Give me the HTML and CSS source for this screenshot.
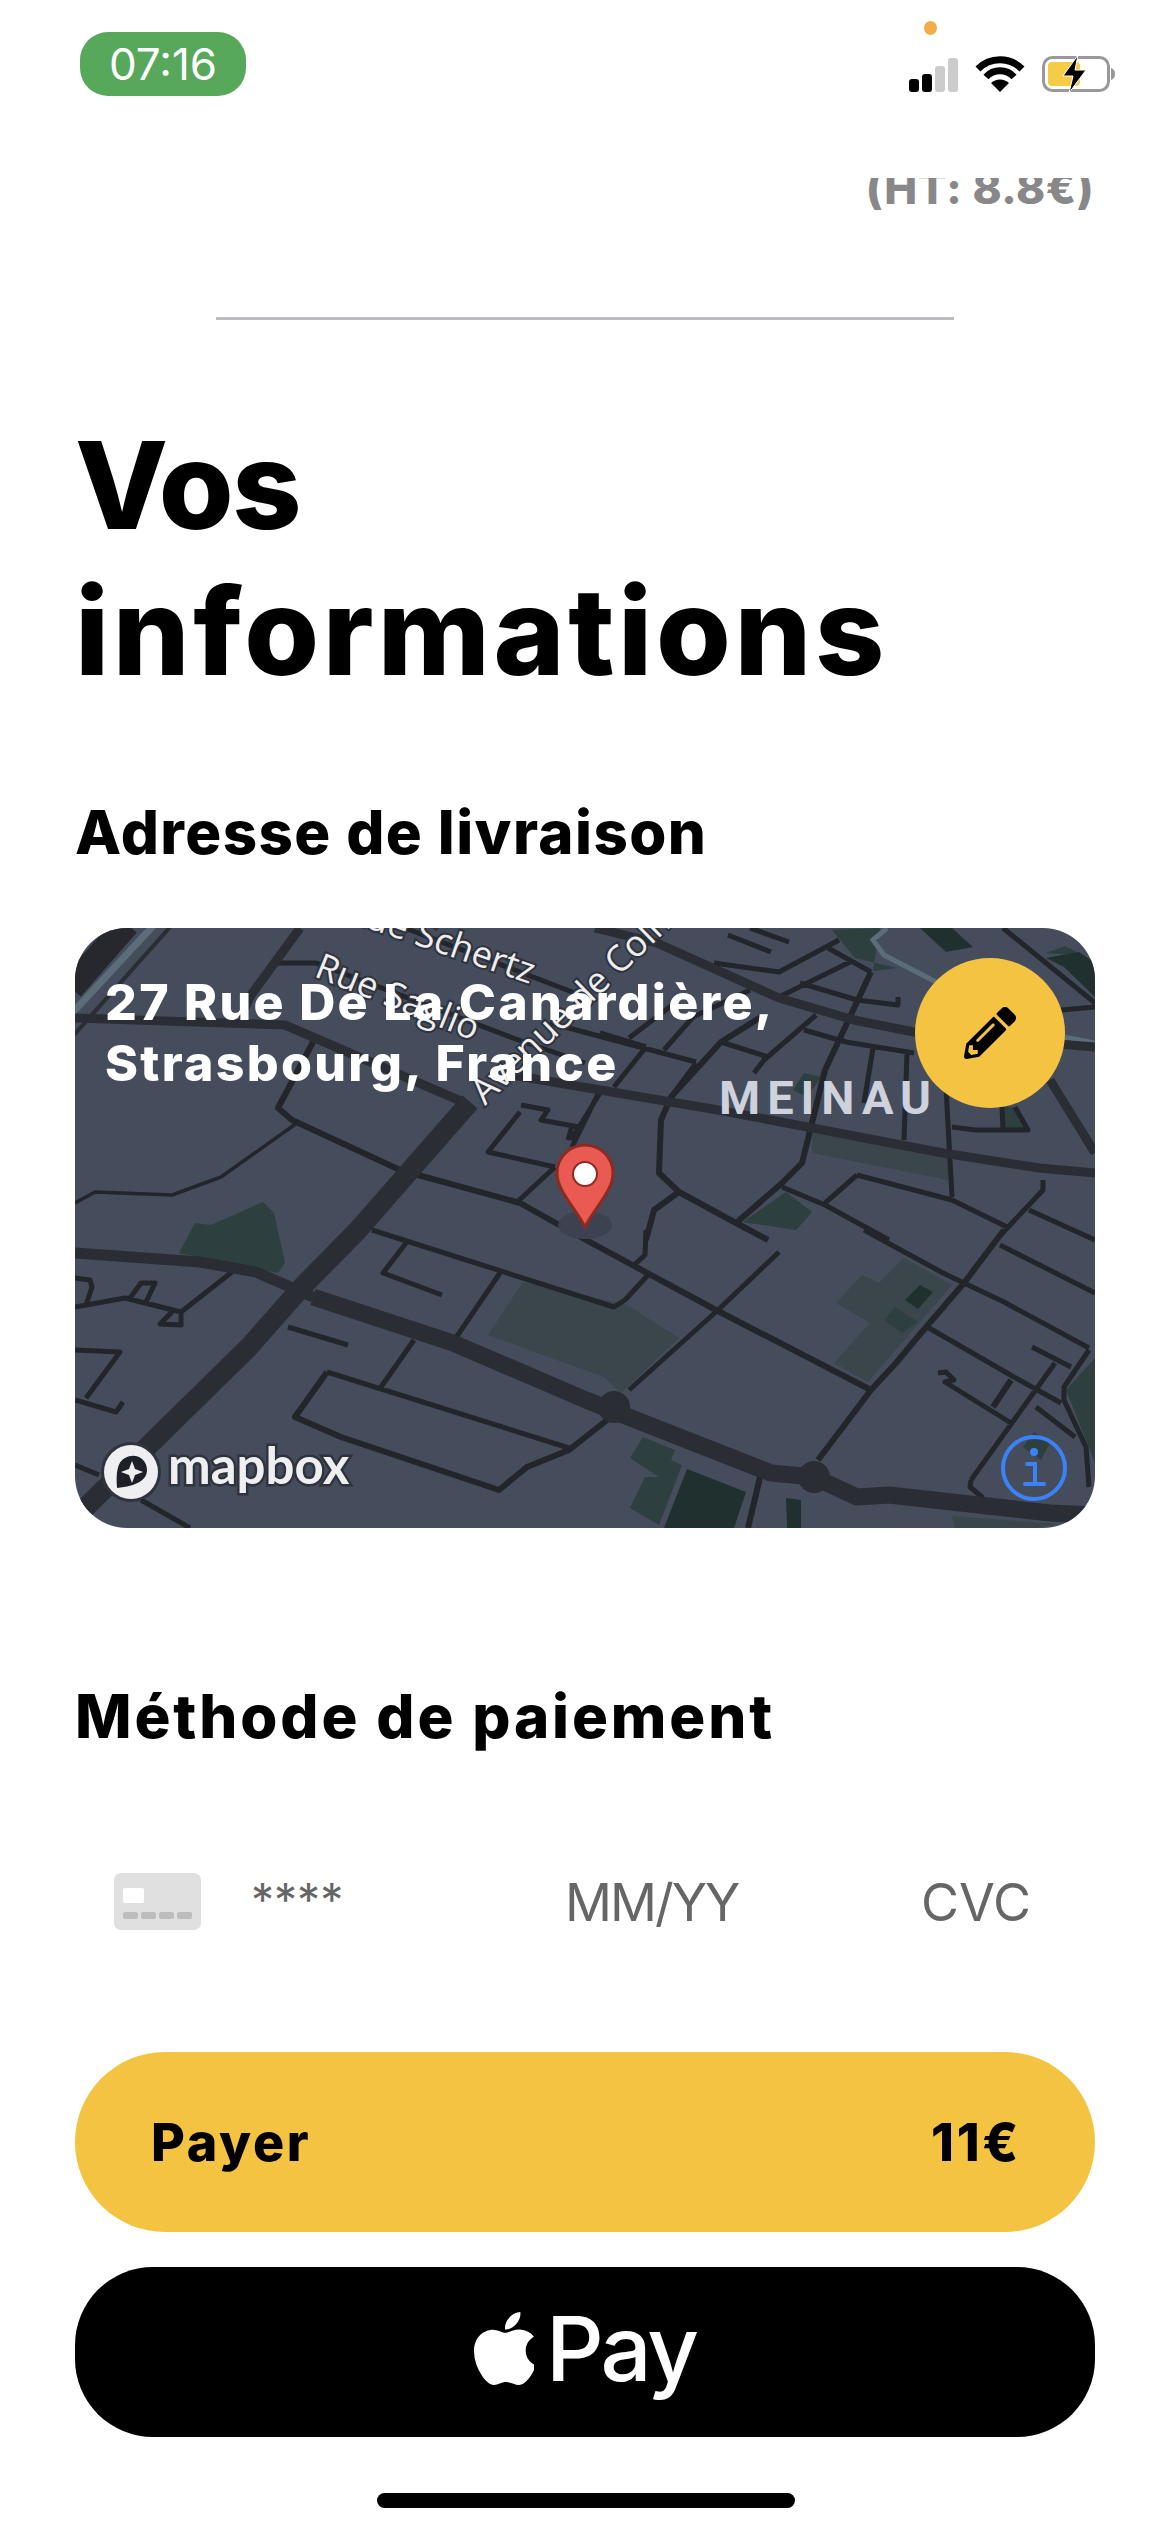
FILE: index.html
```html
<!DOCTYPE html>
<html lang="fr">
<head>
  <meta charset="UTF-8">
  <meta name="viewport" content="width=device-width, initial-scale=1.0">
  <title>Vos informations</title>
  <link rel="stylesheet" href="styles.css">
</head>
<body>
  <div id="screen">

    <div class="status-bar">
      <div class="time-pill">07:16</div>
      <div class="status-icons">
        <span class="privacy-dot"></span>
        <div class="signal">
          <span class="bar bar-1"></span>
          <span class="bar bar-2"></span>
          <span class="bar bar-3 off"></span>
          <span class="bar bar-4 off"></span>
        </div>
        <svg class="wifi" width="50" height="36" viewBox="0 0 50 36">
          <path d="M3 13A31 31 0 0 1 47 13" fill="none" stroke="#000" stroke-width="7"/>
          <path d="M11 21A19 19 0 0 1 39 21" fill="none" stroke="#000" stroke-width="7"/>
          <path d="M25 36L16 27A13 13 0 0 1 34 27Z" fill="#000"/>
        </svg>
        <svg class="battery" width="74" height="38" viewBox="0 0 74 38">
          <rect x="1.5" y="2.5" width="65" height="33" rx="9" fill="#fff" stroke="#999" stroke-width="3"/>
          <rect x="6" y="7" width="32" height="24" rx="4" fill="#f6cb45"/>
          <path d="M69 13c3 1 4 3 4 6s-1 5-4 6z" fill="#999"/>
          <path d="M36 0L21 21H31L27 38L44 15H33Z" fill="#000" stroke="#fff" stroke-width="1"/>
        </svg>
      </div>
    </div>

    <div class="price-clip"><span class="price-ht">(HT: 8.8€)</span></div>
    <div class="divider"></div>

    <h1 class="page-title"><span class="title-short">Vos</span><br>informations</h1>

    <h2 class="section-title">Adresse de livraison</h2>

    <div class="map-card">
      <svg class="map" width="1020" height="600" viewBox="0 0 1020 600">
        <rect width="1020" height="600" fill="#454c5b"/>

        <!-- parks -->
        <g fill="#3a464b">
          <path d="M448 354L552 377L604 410L546 465L529 449L413 407Z"/>
          <path d="M737 205L873 229L873 252L737 225Z"/>
          <path d="M761 375L787 347L804 355L829 330L877 357L793 454L759 435L795 395Z"/>
          <path d="M877 588L982 596L960 600L880 600Z"/>
        </g>
        <g fill="#2d3f3e">
          <path d="M188 274L199 285L210 335L203 345L104 325L120 295L136 297Z"/>
          <path d="M757 2L805 0L798 43L822 40L780 30Z"/>
          <path d="M971 25L990 18L1010 28Z"/>
          <path d="M729 145L746 149L732 169L718 162Z"/>
          <path d="M927 179L941 179L953 202L927 202Z"/>
          <path d="M711 264L737 284L721 302L668 294Z"/>
          <path d="M820 379L843 394L827 405L809 392Z"/>
          <path d="M568 509L600 522L596 532L607 537L584 597L555 580L570 549L584 549L555 530Z"/>
          <path d="M1020 430L991 462L1011 512L1020 535Z"/>
          <path d="M959 504L975 515L966 532L948 519Z"/>
        </g>
        <g fill="#20302f">
          <path d="M845 0L877 0L898 19L871 24Z"/>
          <path d="M971 30L1004 24L1020 35L1020 69L989 39Z"/>
          <path d="M845 357L858 364L843 381L830 372Z"/>
          <path d="M612 541L671 564L659 600L589 600Z"/>
          <path d="M711 570L726 572L726 600L712 600Z"/>
        </g>

        <!-- water and rail -->
        <path d="M812 0L798 12L809 27L861 54M989 109L1020 115" fill="none" stroke="#5a6d78" stroke-width="5"/>
        <path d="M-4 60L52 -4" fill="none" stroke="#26282d" stroke-width="26"/>
        <path d="M-2 84L78 -2" fill="none" stroke="#5a6d78" stroke-width="7"/>
        <path d="M-2 108L96 -2" fill="none" stroke="#2a2d33" stroke-width="4"/>

        <!-- small streets -->
        <path class="street" d="M201 35L241 35L438 110L510 135M330 0L518 72M445 184L413 224L480 239M446 177L473 182L466 192L504 199M497 198L493 212M524 164L497 219M480 239L441 275
          M653 7L696 24M675 0L714 14M764 12L704 44L639 35M753 20L796 44M775 34L704 69M725 55L782 72L823 77L823 69M741 87L689 132L679 145M729 102L771 114L839 125M798 120L789 175M832 125L829 212M871 159L877 269M877 199L900 202L953 202L940 179M927 179L928 202
          M475 95L621 134M525 105L571 119M571 119L539 159M525 165L496 212M621 135L596 169M554 110L600 75M589 122L618 89L675 62M646 114L693 129M782 247L750 275M782 247L877 272L932 299M707 259L750 277L814 312M968 252L968 262L921 312M954 282L1020 312M986 82L1020 79M928 0L1020 75
          M571 302L570 327L559 337M297 302L539 379L550 372L573 347M704 324L643 382L554 462M789 302L868 345L889 355L929 374L1014 420M925 317L1020 365M854 400L939 449L986 475M863 445L871 444L879 452L870 454L936 495M957 419L996 439M961 479L1000 509M896 552L895 559L907 569L909 575M1014 422L989 459L989 472L1011 519L1014 559M980 435L896 552
          M157 344L106 384L50 370L0 379M106 384L106 397L85 396L97 384M55 370L66 355L80 355L71 374M0 350L15 352L17 359L11 377M0 422L45 424L11 470M0 472L41 484L48 474M213 399L273 417M331 315L308 345L367 367M425 345L378 414M339 412L306 459M0 537L24 547M66 572L115 600M252 444L494 520"/>
        <path class="street street-mid" d="M238 114L203 180L217 192L325 242L445 275L511 312L641 382L796 462M686 89L646 114L596 169L586 192L584 245L604 264L661 295L693 312M604 264L579 282L571 312M796 44L750 142L736 199L727 235L707 255L661 295M252 444L220 489L266 509L424 562L452 539L494 522L532 492M929 302L889 355L846 405L821 435L796 462L743 532M936 452L918 479M686 545L673 600"/>
        <path class="street street-thin" d="M222 195L146 249L97 267L20 264L0 275"/>

        <!-- main roads -->
        <path class="road" d="M225 0L176 67L165 90M0 90L210 97L388 174M425 145L643 182L868 225L964 240L1020 245M520 0L582 15L704 70L779 92L839 104L1020 119M975 152L1020 225"/>
        <path class="road road-wide" d="M395 174L283 302L227 359L174 419L69 522L0 590"/>
        <path class="road road-lower" d="M0 325L125 334L181 344L238 369"/>
        <path class="road road-lower-wide" d="M238 369L378 415L511 472L561 492L696 545L739 549L782 569L814 567L975 585L1020 587"/>
        <circle cx="539" cy="479" r="16" fill="#2a2d33"/>
        <circle cx="739" cy="549" r="16" fill="#2a2d33"/>

        <!-- labels -->
        <text class="street-label" transform="translate(455 56) rotate(19)" text-anchor="end">Rue Schertz</text>
        <text class="street-label" transform="translate(238 48) rotate(22)">Rue Saglio</text>
        <text class="street-label" transform="translate(410 178) rotate(-44)">Avenue de Colmar</text>
        <text class="area-label" x="644" y="186">MEINAU</text>

        <!-- pin -->
        <ellipse cx="510" cy="297" rx="27" ry="14" fill="#3c424f"/>
        <path d="M510 299C500 279 482 263 482 245A28 28 0 0 1 538 245C538 263 520 279 510 299Z" fill="#e85a52" stroke="#8e2a22" stroke-width="3"/>
        <circle cx="510" cy="246" r="12" fill="#fff" stroke="#8e2a22" stroke-width="2"/>

        <!-- mapbox logo -->
        <circle cx="56" cy="544" r="30" fill="#2f333d"/>
        <circle cx="56" cy="544" r="27" fill="#efeff1"/>
        <path d="M42 560C41 545 42 534 50 530C60 524 72 530 72 542C72 552 62 558 42 560Z" fill="#1d2026"/>
        <path d="M57 533L60 541L68 544L60 547L57 555L54 547L46 544L54 541Z" fill="#efeff1"/>
        <text class="mapbox-word" x="93" y="556">mapbox</text>

        <!-- info -->
        <circle cx="959" cy="540" r="31" fill="none" stroke="#3b82f6" stroke-width="4"/>
        <circle cx="959" cy="524" r="4" fill="#3b82f6"/>
        <path d="M952 536H960V556M950 556H969" fill="none" stroke="#3b82f6" stroke-width="4" stroke-linecap="round"/>
      </svg>

      <p class="map-address">27 Rue De La Canardière,<br>Strasbourg, France</p>

      <button class="edit-btn">
        <svg width="52" height="52" viewBox="0 0 512 512">
          <path d="M497.9 142.1l-46.1 46.1c-4.7 4.7-12.3 4.7-17 0l-111-111c-4.7-4.7-4.7-12.3 0-17l46.1-46.1c18.7-18.7 49.1-18.7 67.9 0l60.1 60.1c18.8 18.7 18.8 49.1 0 67.9zM284.2 99.8L21.6 362.4.4 483.9c-2.9 16.4 11.4 30.6 27.8 27.8l121.5-21.3 262.6-262.6c4.7-4.7 4.7-12.3 0-17l-111-111c-4.8-4.7-12.4-4.7-17.1 0zM124.1 339.9c-5.5-5.5-5.5-14.3 0-19.8l154-154c5.5-5.5 14.3-5.5 19.8 0s5.5 14.3 0 19.8l-154 154c-5.5 5.5-14.3 5.5-19.8 0zM88 424h48v36.3l-64.5 11.3-31.1-31.1L51.7 376H88v48z"/>
        </svg>
      </button>
    </div>

    <h2 class="section-title payment-title">Méthode de paiement</h2>

    <div class="card-row">
      <div class="card-icon">
        <span class="card-chip"></span>
        <div class="card-digits"><span></span><span></span><span></span><span></span></div>
      </div>
      <span class="card-number">****</span>
      <span class="card-expiry">MM/YY</span>
      <span class="card-cvc">CVC</span>
    </div>

    <button class="pay-btn"><span>Payer</span><span>11€</span></button>

    <button class="apple-pay">
      <svg width="60" height="73" viewBox="4 32 365 448" fill="#fff" preserveAspectRatio="none">
        <path d="M318.7 268.7c-.2-36.7 16.4-64.4 50-84.8-18.8-26.9-47.2-41.7-84.7-44.6-35.5-2.8-74.3 20.7-88.5 20.7-15 0-49.4-19.7-76.4-19.7C63.3 141.2 4 184.8 4 273.5q0 39.3 14.4 81.2c12.8 36.7 59 126.7 107.2 125.2 25.2-.6 43-17.9 75.8-17.9 31.8 0 48.3 17.9 76.4 17.9 48.6-.7 90.4-82.5 102.6-119.3-65.2-30.7-61.7-90-61.7-91.9zm-56.6-164.2c27.3-32.4 24.8-61.9 24-72.5-24.1 1.4-52 16.4-67.9 34.9-17.5 19.8-27.8 44.3-25.6 71.9 26.1 2 49.9-11.4 69.5-34.3z"/>
      </svg>
      <span>Pay</span>
    </button>

    <div class="home-indicator"></div>
  </div>
</body>
</html>
```

FILE: styles.css
```css
* {
  box-sizing: border-box;
}

body {
  margin: 0;
  background: #fff;
  font-family: 'Inter', 'Liberation Sans', sans-serif;
  color: #000;
}

#screen {
  width: 1170px;
  height: 2532px;
  overflow: hidden;
}

button {
  border: none;
  font-family: inherit;
  cursor: pointer;
}

/* status bar */
.status-bar {
  height: 178px;
  padding: 32px 54px 0 80px;
  display: flex;
  justify-content: space-between;
  align-items: flex-start;
}

.time-pill {
  width: 166px;
  height: 64px;
  border-radius: 28px;
  background: #57a85a;
  color: #fff;
  font-size: 44px;
  line-height: 64px;
  text-align: center;
}

.status-icons {
  position: relative;
  margin-top: 23px;
  display: flex;
  align-items: flex-end;
  gap: 17px;
}

.privacy-dot {
  position: absolute;
  left: 15px;
  top: -34px;
  width: 13px;
  height: 14px;
  border-radius: 50%;
  background: #f4ab4a;
}

.signal {
  display: flex;
  align-items: flex-end;
  gap: 3px;
}

.bar {
  width: 10px;
  border-radius: 3px;
  background: #000;
}

.bar.off {
  background: #ccc;
}

.bar-1 { height: 13px; }
.bar-2 { height: 18px; }
.bar-3 { height: 26px; }
.bar-4 { height: 34px; }

.battery {
  margin-bottom: -1px;
}

/* price cut off by the scroll */
.price-clip {
  height: 32px;
  padding-right: 76px;
  overflow: hidden;
  display: flex;
  justify-content: flex-end;
  align-items: flex-end;
}

.price-ht {
  color: #888;
  font-size: 44px;
  font-weight: 800;
  letter-spacing: 0.5px;
  line-height: 44px;
}

.divider {
  width: 738px;
  height: 3px;
  margin: 107px 0 0 216px;
  background: #bcbcc0;
}

/* titles */
.page-title {
  margin: 92px 0 0 75px;
  font-size: 121px;
  font-weight: 800;
  letter-spacing: 3.6px;
  line-height: 146px;
}

.title-short {
  letter-spacing: -1.5px;
}

.section-title {
  margin: 92px 0 0 75px;
  font-size: 60px;
  font-weight: 800;
  letter-spacing: 1.4px;
  line-height: 72px;
}

.payment-title {
  margin-top: 152px;
  letter-spacing: 2.85px;
}

/* map */
.map-card {
  position: relative;
  width: 1020px;
  height: 600px;
  margin: 60px 0 0 75px;
  border-radius: 52px;
  overflow: hidden;
}

.map {
  display: block;
}

.street {
  fill: none;
  stroke: #22252a;
  stroke-width: 5;
  stroke-linejoin: round;
}

.street-mid {
  stroke-width: 6;
}

.street-thin {
  stroke-width: 3.5;
}

.road {
  fill: none;
  stroke: #2a2d33;
  stroke-width: 9;
  stroke-linejoin: round;
}

.road-wide {
  stroke-width: 20;
}

.road-lower {
  stroke-width: 11;
}

.road-lower-wide {
  stroke-width: 17;
}

.street-label {
  font-family: 'Open Sans', sans-serif;
  font-size: 36px;
  fill: #eee;
  stroke: #2f333d;
  stroke-width: 4px;
  paint-order: stroke;
}

.area-label {
  font-family: 'Roboto', sans-serif;
  font-size: 47px;
  font-weight: 700;
  letter-spacing: 7px;
  fill: #cdd2dc;
}

.mapbox-word {
  font-family: 'Lato', sans-serif;
  font-size: 51px;
  font-weight: 700;
  fill: #efeff1;
  stroke: #2f333d;
  stroke-width: 5px;
  paint-order: stroke;
}

.map-address {
  position: absolute;
  left: 30px;
  top: 44px;
  margin: 0;
  color: #fff;
  font-size: 50px;
  font-weight: 800;
  letter-spacing: 2.3px;
  line-height: 61px;
}

.edit-btn {
  position: absolute;
  top: 30px;
  right: 30px;
  width: 150px;
  height: 150px;
  padding: 0;
  border-radius: 50%;
  background: #f4c342;
  display: flex;
  align-items: center;
  justify-content: center;
}

/* card fields */
.card-row {
  height: 60px;
  margin: 121px 0 0 114px;
  display: flex;
  align-items: flex-start;
  color: #666;
}

.card-icon {
  width: 87px;
  height: 57px;
  padding: 15px 9px 0;
  border-radius: 7px;
  background: #e0e0e0;
}

.card-chip {
  display: block;
  width: 21px;
  height: 15px;
  border-radius: 2px;
  background: #fff;
}

.card-digits {
  margin-top: 9px;
  display: flex;
  gap: 3px;
}

.card-digits span {
  width: 15px;
  height: 7px;
  border-radius: 2px;
  background: #bdbdbd;
}

.card-number {
  width: 314px;
  margin: 3px 0 0 50px;
  font-size: 46px;
  line-height: 48px;
}

.card-expiry {
  width: 356px;
  margin-top: -2px;
  font-size: 52px;
  letter-spacing: -2px;
  line-height: 64px;
}

.card-cvc {
  margin-top: -2px;
  font-size: 52px;
  line-height: 64px;
}

/* pay buttons */
.pay-btn {
  width: 1020px;
  height: 180px;
  margin: 119px 0 0 75px;
  padding: 0 74px 0 76px;
  border-radius: 90px;
  background: #f4c342;
  color: #000;
  font-size: 52px;
  font-weight: 800;
  letter-spacing: 2.7px;
  display: flex;
  align-items: center;
  justify-content: space-between;
}

.apple-pay {
  width: 1020px;
  height: 170px;
  margin: 35px 0 0 75px;
  padding-bottom: 8px;
  border-radius: 78px;
  background: #000;
  color: #fff;
  font-size: 90px;
  font-weight: 500;
  letter-spacing: -3px;
  display: flex;
  align-items: center;
  justify-content: center;
  gap: 12px;
}

.home-indicator {
  width: 418px;
  height: 15px;
  margin: 56px 0 0 377px;
  border-radius: 8px;
  background: #000;
}
```
